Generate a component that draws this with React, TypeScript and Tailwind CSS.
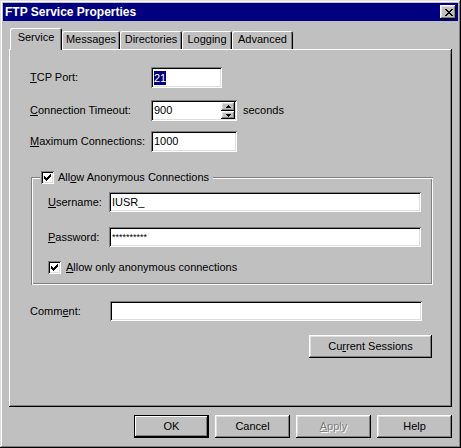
import React from "react";

const sunken =
  "shadow-[inset_1px_1px_0_#808080,inset_-1px_-1px_0_#fff,inset_2px_2px_0_#000,inset_-2px_-2px_0_#dfdfdf]";
const raised =
  "shadow-[inset_-1px_-1px_0_#000,inset_1px_1px_0_#fff,inset_-2px_-2px_0_#808080,inset_2px_2px_0_#dfdfdf]";

function CheckBox() {
  return (
    <span className={`flex shrink-0 w-[13px] h-[13px] bg-white p-[2px] ${sunken}`}>
      <svg width="9" height="9" viewBox="0 0 9 9" shapeRendering="crispEdges">
        <path
          fill="#000"
          d="M7 1h1v1h-1z M6 2h2v1h-2z M1 3h1v1h-1z M5 3h3v1h-3z M1 4h2v1h-2z M4 4h3v1h-3z M1 5h5v1h-5z M2 6h3v1h-3z M3 7h1v1h-1z"
        />
      </svg>
    </span>
  );
}

function Arrow({ up }: { up: boolean }) {
  return (
    <svg width="5" height="3" viewBox="0 0 5 3" shapeRendering="crispEdges">
      <path
        fill="#000"
        d={up ? "M2 0h1v1h-1z M1 1h3v1h-3z M0 2h5v1h-5z" : "M0 0h5v1h-5z M1 1h3v1h-3z M2 2h1v1h-1z"}
      />
    </svg>
  );
}

function Tab({ label, selected, w }: { label: string; selected?: boolean; w: string }) {
  return (
    <div
      className={`${w} flex justify-center rounded-t-[2px] bg-[#c0c0c0] shadow-[inset_1px_1px_0_#fff,inset_-1px_0_0_#000,inset_-2px_0_0_#808080] ${
        selected ? "relative z-10 h-[22px] -mb-px pt-[3px]" : "h-[18px] pt-[2px]"
      }`}
    >
      <span className="leading-[13px]">{label}</span>
    </div>
  );
}

export default function App() {
  return (
    <div className="w-[461px] h-[448px] bg-[#c0c0c0] p-[3px] flex flex-col text-[11px] leading-[13px] text-black font-['Liberation_Sans',Arial,sans-serif] shadow-[inset_-1px_-1px_0_#000,inset_1px_1px_0_#dfdfdf,inset_-2px_-2px_0_#808080,inset_2px_2px_0_#fff]">
      {/* Title bar */}
      <div className="h-[18px] bg-[#000080] flex items-center justify-between pl-[2px] pr-[2px]">
        <span className="text-white font-bold text-[12px] leading-[14px]">FTP Service Properties</span>
        <div className={`w-[16px] h-[14px] bg-[#c0c0c0] flex items-center justify-center pl-[1px] ${raised}`}>
          <svg width="8" height="7" viewBox="0 0 8 7" shapeRendering="crispEdges">
            <path
              fill="#000"
              d="M0 0h2v1h-2z M6 0h2v1h-2z M1 1h2v1h-2z M5 1h2v1h-2z M2 2h4v1h-4z M3 3h2v1h-2z M2 4h4v1h-4z M1 5h2v1h-2z M5 5h2v1h-2z M0 6h2v1h-2z M6 6h2v1h-2z"
            />
          </svg>
        </div>
      </div>

      {/* Tabs */}
      <div className="mt-[7px] ml-[7px] h-[21px] flex items-end">
        <Tab label="Service" selected w="w-[52px]" />
        <Tab label="Messages" w="w-[58px]" />
        <Tab label="Directories" w="w-[62px]" />
        <Tab label="Logging" w="w-[50px]" />
        <Tab label="Advanced" w="w-[61px]" />
      </div>

      {/* Panel */}
      <div className="ml-[6px] w-[443px] h-[358px] flex flex-col pl-[21px] pr-[19px] shadow-[inset_-1px_-1px_0_#000,inset_1px_1px_0_#fff,inset_-2px_-2px_0_#808080]">
        <div className="mt-[18px] h-[21px] flex items-center">
          <span className="w-[121px]">
            <u>T</u>CP Port:
          </span>
          <div className={`w-[71px] h-[21px] bg-white flex items-center pl-[3px] ${sunken}`}>
            <span className="bg-[#000080] text-white leading-[14px]">21</span>
          </div>
        </div>

        <div className="mt-[12px] h-[21px] flex items-center">
          <span className="w-[121px]">
            <u>C</u>onnection Timeout:
          </span>
          <div className={`w-[86px] h-[21px] bg-white flex p-[2px] ${sunken}`}>
            <span className="flex-1 flex items-center pl-[1px]">900</span>
            <div className="w-[14px] flex flex-col">
              <div className={`h-[9px] bg-[#c0c0c0] flex items-center justify-center ${raised}`}>
                <Arrow up />
              </div>
              <div className={`h-[8px] bg-[#c0c0c0] flex items-center justify-center ${raised}`}>
                <Arrow up={false} />
              </div>
            </div>
          </div>
          <span className="ml-[6px]">seconds</span>
        </div>

        <div className="mt-[10px] h-[21px] flex items-center">
          <span className="w-[121px]">
            <u>M</u>aximum Connections:
          </span>
          <div className={`w-[86px] h-[21px] bg-white flex items-center pl-[3px] ${sunken}`}>1000</div>
        </div>

        {/* Group box */}
        <div className="relative mt-[25px] ml-[1px] w-[402px] h-[108px] flex flex-col pl-[17px] pr-[12px] pt-[15px] shadow-[inset_1px_1px_0_#808080,inset_-1px_-1px_0_#fff,inset_2px_2px_0_#fff,inset_-2px_-2px_0_#808080]">
          <div className="absolute left-[9px] -top-[6px] h-[13px] flex items-center gap-[4px] bg-[#c0c0c0] pl-[1px] pr-[4px]">
            <CheckBox />
            <span>
              All<u>o</u>w Anonymous Connections
            </span>
          </div>

          <div className="h-[20px] flex items-center">
            <span className="w-[61px]">
              <u>U</u>sername:
            </span>
            <div className={`flex-1 h-[20px] bg-white flex items-center pl-[3px] ${sunken}`}>IUSR_</div>
          </div>

          <div className="mt-[15px] h-[20px] flex items-center">
            <span className="w-[61px]">
              <u>P</u>assword:
            </span>
            <div className={`flex-1 h-[20px] bg-white flex items-center pl-[3px] text-[9px] ${sunken}`}>
              **********
            </div>
          </div>

          <div className="mt-[14px] h-[13px] flex items-center gap-[5px]">
            <CheckBox />
            <span>
              <u>A</u>llow only anonymous connections
            </span>
          </div>
        </div>

        <div className="mt-[16px] h-[20px] flex items-center">
          <span className="w-[80px]">
            Comm<u>e</u>nt:
          </span>
          <div className={`w-[312px] h-[20px] bg-white ${sunken}`} />
        </div>

        <div
          className={`mt-[14px] self-end mr-[1px] w-[123px] h-[23px] flex items-center justify-center ${raised}`}
        >
          <span>
            Cu<u>r</u>rent Sessions
          </span>
        </div>
      </div>

      {/* Bottom buttons */}
      <div className="mt-[8px] pr-[6px] flex justify-end gap-[6px]">
        <div className="w-[75px] h-[23px] flex items-center justify-center border border-black shadow-[inset_-1px_-1px_0_#000,inset_1px_1px_0_#fff,inset_-2px_-2px_0_#808080]">
          OK
        </div>
        <div className={`w-[75px] h-[23px] flex items-center justify-center ${raised}`}>Cancel</div>
        <div
          className={`w-[75px] h-[23px] flex items-center justify-center text-[#808080] [text-shadow:1px_1px_0_#fff] ${raised}`}
        >
          <span>
            <u>A</u>pply
          </span>
        </div>
        <div className={`w-[75px] h-[23px] flex items-center justify-center ${raised}`}>Help</div>
      </div>
    </div>
  );
}
